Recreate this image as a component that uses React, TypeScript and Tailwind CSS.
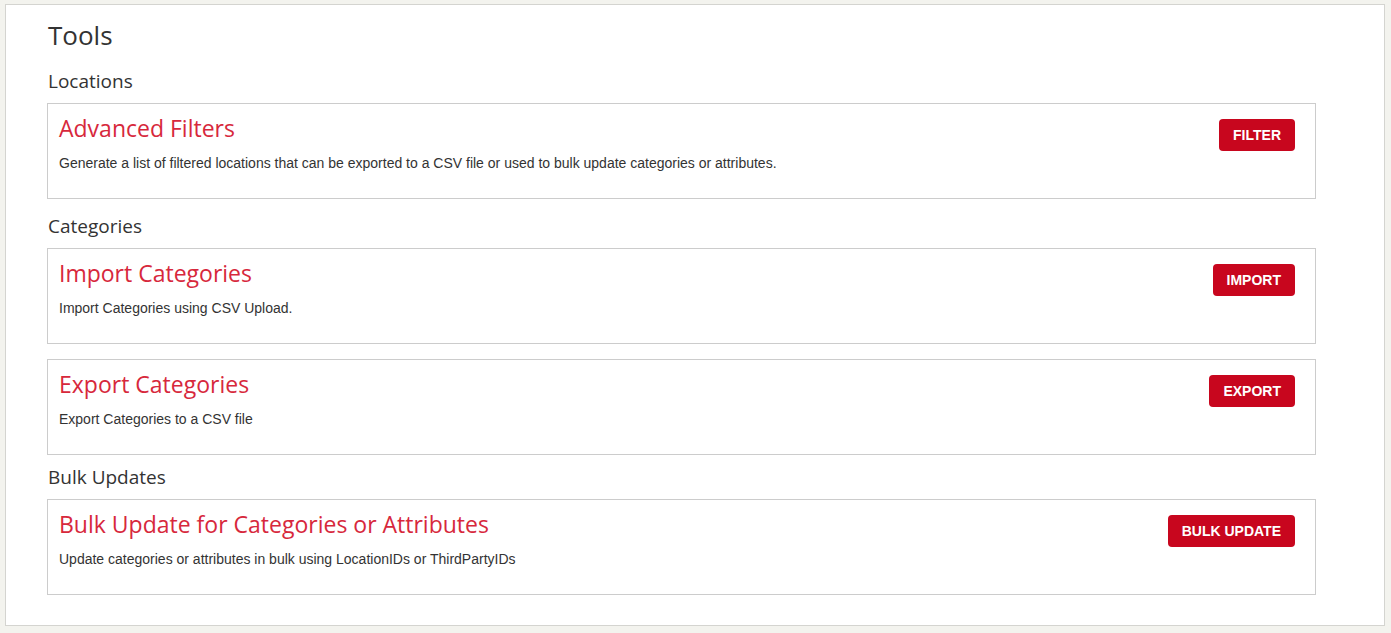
const sections = [
  {
    label: 'Locations',
    spacing: 'mt-[14px]',
    tools: [
      {
        title: 'Advanced Filters',
        description:
          'Generate a list of filtered locations that can be exported to a CSV file or used to bulk update categories or attributes.',
        action: 'FILTER',
      },
    ],
  },
  {
    label: 'Categories',
    spacing: 'mt-[14px]',
    tools: [
      {
        title: 'Import Categories',
        description: 'Import Categories using CSV Upload.',
        action: 'IMPORT',
      },
      {
        title: 'Export Categories',
        description: 'Export Categories to a CSV file',
        action: 'EXPORT',
      },
    ],
  },
  {
    label: 'Bulk Updates',
    spacing: 'mt-[9px]',
    tools: [
      {
        title: 'Bulk Update for Categories or Attributes',
        description: 'Update categories or attributes in bulk using LocationIDs or ThirdPartyIDs',
        action: 'BULK UPDATE',
      },
    ],
  },
];

const heading = "font-['Open_Sans',sans-serif]";
const body = "font-['Liberation_Sans',Arial,sans-serif]";

export default function App() {
  return (
    <div className="min-h-screen bg-[#f3f3ee] pt-[4px] pr-[6px] pb-[7px] pl-[5px]">
      <div className="border border-[#d4d4d0] bg-white pt-[11px] pb-[30px] pl-[41px] pr-[68px]">
        <h1 className={`${heading} pl-[1px] text-[26px] leading-[38px] text-[#333]`}>Tools</h1>

        {sections.map((section) => (
          <div key={section.label}>
            <h2 className={`${heading} ${section.spacing} mb-[9px] pl-[1px] text-[19px] leading-[26px] text-[#333]`}>
              {section.label}
            </h2>
            <div className="space-y-[15px]">
              {section.tools.map((tool) => (
                <div
                  key={tool.title}
                  className="flex h-[96px] items-start justify-between border border-[#cccccc] pt-[9px] pr-[20px] pl-[11px]"
                >
                  <div>
                    <h3 className={`${heading} text-[23px] leading-[30px] text-[#d7283c]`}>{tool.title}</h3>
                    <p className={`${body} mt-[10px] text-[14px] leading-[20px] text-[#333]`}>{tool.description}</p>
                  </div>
                  <button
                    className={`${body} mt-[6px] h-[32px] rounded-[4px] bg-[#c8061e] px-[14px] text-[14px] font-bold text-white`}
                  >
                    {tool.action}
                  </button>
                </div>
              ))}
            </div>
          </div>
        ))}
      </div>
    </div>
  );
}
